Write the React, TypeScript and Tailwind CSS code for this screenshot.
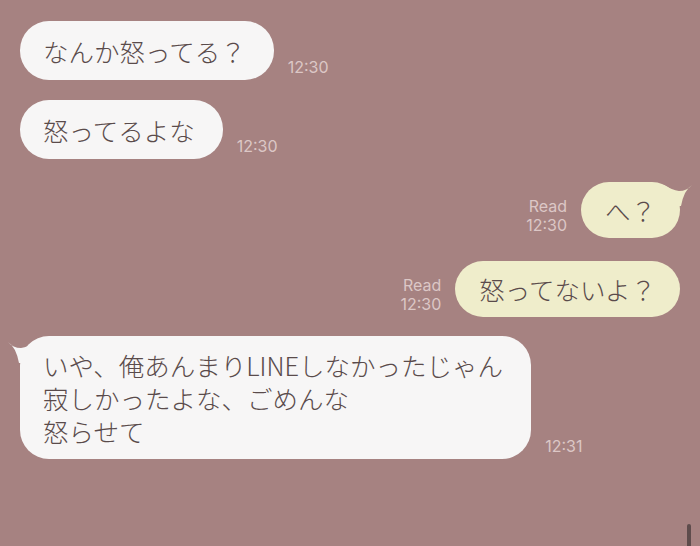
import React from 'react';

const jp = { fontFamily: '"Noto Sans CJK JP", "Noto Sans", sans-serif' };
const num = { fontFamily: 'Inter, "Noto Sans", sans-serif' };

const Time: React.FC<{ read?: boolean; time: string }> = ({ read, time }) => (
  <div className="flex flex-col items-end text-[16px] leading-[19px] text-[#dcc7c6]" style={num}>
    {read && <span>Read</span>}
    <span>{time}</span>
  </div>
);

const SentTail = () => (
  <svg className="absolute -right-[14px] -top-[2px]" width="30" height="28" viewBox="0 0 30 28">
    <path d="M0 5 Q8 10 15 11 Q23 11 28 5 Q20 10 17 26 L0 26 Z" fill="#efedcb" />
  </svg>
);

const RecvTail = () => (
  <svg className="absolute -left-[14px] top-[1px]" width="30" height="28" viewBox="0 0 30 28">
    <path d="M30 5 Q22 10 15 11 Q7 11 2 5 Q10 10 13 26 L30 26 Z" fill="#f7f6f6" />
  </svg>
);

const Received: React.FC<{ lines: string[]; time: string; tail?: boolean; mt: string }> = ({ lines, time, tail, mt }) => (
  <div className={`flex items-end gap-[14px] ${mt}`}>
    <div
      className={`relative bg-[#f7f6f6] text-[#5a4b4b] text-[25.5px] font-light pl-[23px] pr-[28px] rounded-[29px] ${
        lines.length > 1 ? 'py-[12px] leading-[33px]' : 'py-[10px] leading-[39px]'
      }`}
      style={jp}
    >
      {tail && <RecvTail />}
      {lines.map((l) => (
        <div key={l}>{l}</div>
      ))}
    </div>
    <div className="mb-[3px]">
      <Time time={time} />
    </div>
  </div>
);

const Sent: React.FC<{ text: string; mt: string; tail?: boolean }> = ({ text, mt, tail }) => (
  <div className={`flex items-end justify-end gap-[14px] ${mt}`}>
    <div className="mb-[3px]">
      <Time read time="12:30" />
    </div>
    <div
      className="relative bg-[#efedcb] text-[#5a4b4b] text-[25.5px] font-light leading-[36px] py-[10px] px-[24px] rounded-[28px]"
      style={jp}
    >
      {tail && <SentTail />}
      {text}
    </div>
  </div>
);

export default function App() {
  return (
    <div className="relative w-[700px] h-[546px] overflow-hidden bg-[#a68281]">
      <div className="flex flex-col px-[20px] pt-[21px]">
        <Received lines={['なんか怒ってる？']} time="12:30" mt="mt-0" />
        <Received lines={['怒ってるよな']} time="12:30" mt="mt-[20px]" />
        <Sent text="へ？" mt="mt-[23px]" tail />
        <Sent text="怒ってないよ？" mt="mt-[23px]" />
        <Received
          lines={['いや、俺あんまりLINEしなかったじゃん', '寂しかったよな、ごめんな', '怒らせて']}
          time="12:31"
          tail
          mt="mt-[19px]"
        />
      </div>
      <div className="absolute right-[9px] bottom-0 w-[4px] h-[22px] rounded-t-full bg-[#5e4c4c]" />
    </div>
  );
}
